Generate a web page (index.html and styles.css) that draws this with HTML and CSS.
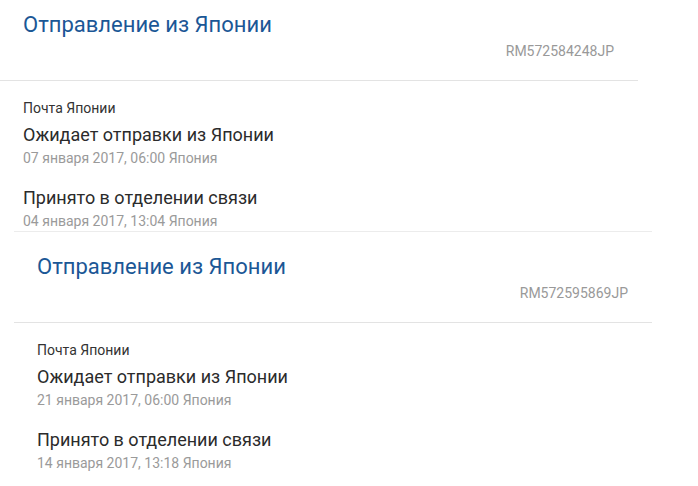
FILE: index.html
```html
<!DOCTYPE html>
<html lang="ru">
<head>
    <meta charset="UTF-8">
    <meta name="viewport" content="width=device-width, initial-scale=1.0">
    <title>Отслеживание</title>
    <link rel="stylesheet" href="styles.css">
</head>
<body>

    <div class="parcels">
        <section class="parcel parcel-first">
            <div class="parcel-head">
                <h2 class="parcel-title">Отправление из Японии</h2>
                <div class="parcel-code">RM572584248JP</div>
            </div>
            <div class="parcel-body">
                <div class="carrier">Почта Японии</div>
                <div class="event">
                    <div class="event-name">Ожидает отправки из Японии</div>
                    <div class="event-date">07 января 2017, 06:00 Япония</div>
                </div>
                <div class="event">
                    <div class="event-name">Принято в отделении связи</div>
                    <div class="event-date">04 января 2017, 13:04 Япония</div>
                </div>
            </div>
        </section>

        <section class="parcel parcel-second">
            <div class="parcel-head">
                <h2 class="parcel-title">Отправление из Японии</h2>
                <div class="parcel-code">RM572595869JP</div>
            </div>
            <div class="parcel-body">
                <div class="carrier">Почта Японии</div>
                <div class="event">
                    <div class="event-name">Ожидает отправки из Японии</div>
                    <div class="event-date">21 января 2017, 06:00 Япония</div>
                </div>
                <div class="event">
                    <div class="event-name">Принято в отделении связи</div>
                    <div class="event-date">14 января 2017, 13:18 Япония</div>
                </div>
            </div>
        </section>
    </div>

</body>
</html>
```

FILE: styles.css
```css
body {
    font-family: Roboto, 'Liberation Sans', sans-serif;
    margin: 0;
    padding: 0;
    background-color: #fff;
    color: #2b2b2b;
    overflow: hidden;
}

.parcel {
    width: 638px;
    border-top: 1px solid #ececec;
}

.parcel-first {
    margin-top: -11px;
}

.parcel-second {
    margin-left: 14px;
}

.parcel-head {
    padding: 22px 24px 19px 23px;
    border-bottom: 1px solid #e3e3e3;
}

.parcel-title {
    margin: 0;
    font-size: 22px;
    font-weight: 400;
    line-height: 26px;
    color: #1b5796;
}

.parcel-code {
    margin-top: 3px;
    text-align: right;
    font-size: 14px;
    line-height: 20px;
    color: #999;
}

.parcel-body {
    padding: 18px 23px 1px;
}

.carrier {
    font-size: 14px;
    line-height: 18px;
    color: #333;
    margin-bottom: 6px;
}

.event {
    margin-bottom: 19px;
}

.event:last-child {
    margin-bottom: 0;
}

.event-name {
    font-size: 18px;
    line-height: 24px;
    color: #2b2b2b;
}

.event-date {
    margin-top: 2px;
    font-size: 14px;
    line-height: 18px;
    color: #9a9a9a;
}
```
